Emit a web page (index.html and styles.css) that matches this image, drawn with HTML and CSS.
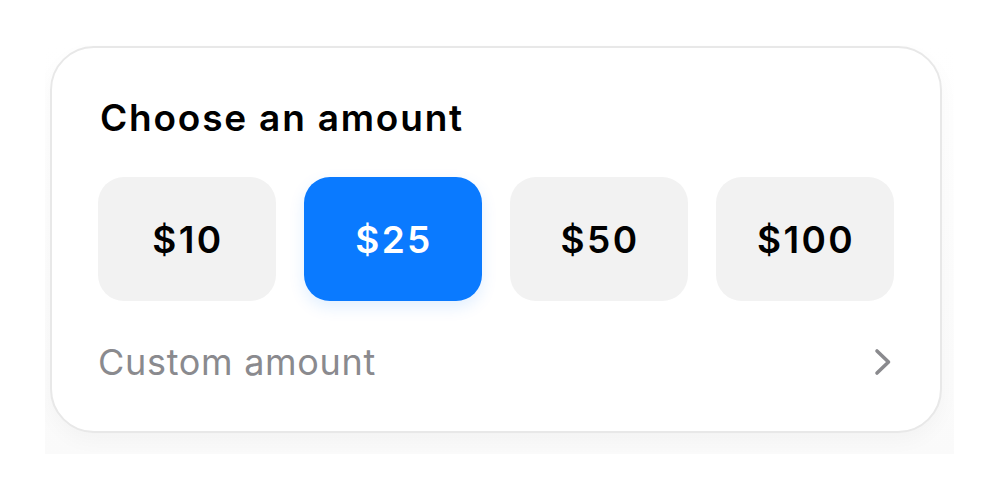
FILE: index.html
```html
<!DOCTYPE html>
<html lang="en">
<head>
	<meta charset="utf-8">
	<title>amount</title>
	<link rel="stylesheet" href="styles.css">
</head>
<body>
	<div class="amountWrap">
		<div class="amountBox">
			<h1>Choose an amount</h1>
			<div class="amountList">
				<button type="button" class="btn">$10</button>
				<button type="button" class="btn on">$25</button>
				<button type="button" class="btn">$50</button>
				<button type="button" class="btn">$100</button>
			</div>
			<a href="#" class="customAmount">
				<span>Custom amount</span>
				<svg width="18" height="28" viewBox="0 0 18 28"><path d="M3 3 L14.5 14 L3 25" fill="none" stroke="#8a8a8e" stroke-width="3.6" stroke-linecap="round" stroke-linejoin="round"/></svg>
			</a>
		</div>
	</div>
</body>
</html>
```

FILE: styles.css
```css
* {margin:0; padding:0; box-sizing:border-box;}
body {background:#fff; font-family:Inter, "Noto Sans", sans-serif;}
.amountWrap {margin:45px 0 0 45px; padding:1px 12px 21px 5px; width:909px; overflow:hidden; background:linear-gradient(#fff, #fafafa);}
.amountBox {width:892px; height:387px; padding:49px 46px 0; border:2px solid #e8e8e8; border-radius:44px; background:#fff; box-shadow:0 8px 20px rgba(0,0,0,0.03);}
.amountBox h1 {padding-left:2px; font-size:37px; line-height:42px; font-weight:600; color:#000; letter-spacing:1.8px;}
.amountList {display:flex; gap:28px; margin-top:38px;}
.amountList .btn {flex:1; height:124px; padding-left:2px; border:0; border-radius:26px; background:#f2f2f2; color:#000; font-family:inherit; font-size:37px; font-weight:600; letter-spacing:2.4px;}
.amountList .btn.on {background:#0a7aff; color:#fff; box-shadow:0 6px 16px rgba(10,122,255,0.12);}
.customAmount {display:flex; align-items:center; justify-content:space-between; margin-top:41px; padding-right:2px; height:40px; color:#8a8a8e; font-size:36px; line-height:40px; letter-spacing:0.7px; text-decoration:none;}
```
